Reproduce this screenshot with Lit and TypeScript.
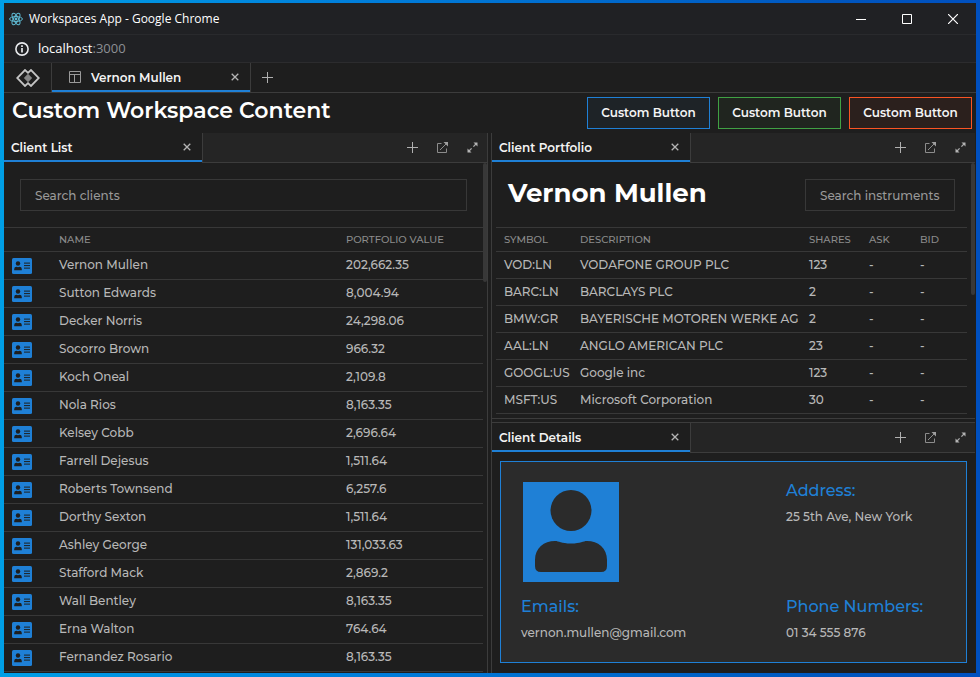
import { LitElement, html, css, svg } from "lit";
import { customElement, property } from "lit/decorators.js";

const clients: [string, string][] = [
  ["Vernon Mullen", "202,662.35"],
  ["Sutton Edwards", "8,004.94"],
  ["Decker Norris", "24,298.06"],
  ["Socorro Brown", "966.32"],
  ["Koch Oneal", "2,109.8"],
  ["Nola Rios", "8,163.35"],
  ["Kelsey Cobb", "2,696.64"],
  ["Farrell Dejesus", "1,511.64"],
  ["Roberts Townsend", "6,257.6"],
  ["Dorthy Sexton", "1,511.64"],
  ["Ashley George", "131,033.63"],
  ["Stafford Mack", "2,869.2"],
  ["Wall Bentley", "8,163.35"],
  ["Erna Walton", "764.64"],
  ["Fernandez Rosario", "8,163.35"],
];

const instruments: [string, string, string][] = [
  ["VOD:LN", "VODAFONE GROUP PLC", "123"],
  ["BARC:LN", "BARCLAYS PLC", "2"],
  ["BMW:GR", "BAYERISCHE MOTOREN WERKE AG", "2"],
  ["AAL:LN", "ANGLO AMERICAN PLC", "23"],
  ["GOOGL:US", "Google inc", "123"],
  ["MSFT:US", "Microsoft Corporation", "30"],
];

const icon = (w: number, h: number, body: unknown) =>
  html`<svg width=${w} height=${h} viewBox="0 0 ${w} ${h}" fill="none" aria-hidden="true">${body}</svg>`;

const closeIcon = icon(8, 8, svg`<path d="M.7 .7 7.3 7.3M7.3 .7 .7 7.3" stroke="#b4b4b4" stroke-width="1.3"/>`);
const plusIcon = icon(11, 11, svg`<path d="M5.5 0V11M0 5.5H11" stroke="#b0b0b0"/>`);
const popoutIcon = icon(11, 11, svg`<path d="M4.5 1.5H.5V10.5H9.5V6.5M3 8 9 2" stroke="#8c8c8c"/><path d="M6.5 0H11V4.5Z" fill="#a0a0a0"/>`);
const expandIcon = icon(11, 11, svg`<path d="M6.4 4.6 9 2M4.6 6.4 2 9" stroke="#a8a8a8" stroke-width="1.3"/><path d="M6.5 .5H10.5V4.5ZM4.5 10.5H.5V6.5Z" fill="#b4b4b4"/>`);
const cardIcon = icon(20, 16, svg`<rect width="20" height="16" rx="1.5" fill="#1f80d6"/>
  <g fill="#1e1e1e"><circle cx="6" cy="5.5" r="2.2"/><path d="M2.2 12.2V11Q2.2 8.8 4.6 8.8Q6 9.5 7.4 8.8Q9.8 8.8 9.8 11V12.2Z"/>
  <rect x="12" y="4.6" width="6" height="1"/><rect x="12" y="7.1" width="6" height="1"/><rect x="12" y="9.6" width="6" height="1"/></g>`);
const reactIcon = icon(14, 14, svg`<g stroke="#5eb8d0"><ellipse cx="7" cy="7" rx="6.4" ry="2.5"/><ellipse cx="7" cy="7" rx="6.4" ry="2.5" transform="rotate(60 7 7)"/><ellipse cx="7" cy="7" rx="6.4" ry="2.5" transform="rotate(120 7 7)"/></g><circle cx="7" cy="7" r="1.4" fill="#5eb8d0"/>`);
const infoIcon = icon(14, 14, svg`<circle cx="7" cy="7" r="6.1" stroke="#e8eaed" stroke-width="1.6"/><path d="M7 3.2V4.9M7 6V10.6" stroke="#e8eaed" stroke-width="1.7"/>`);
const logoIcon = icon(24, 18, svg`<path d="M12 4.8 16.2 9 12 13.2 7.8 9Z" fill="#858585"/><path d="M12.6 4.4 9 1 1.2 9 9 17 12.6 13.6M11.4 4.4 15 1 22.8 9 15 17 11.4 13.6" stroke="#c4c4c4" stroke-width="1.8"/>`);
const layoutIcon = icon(12, 12, svg`<path d="M.5 .5H11.5V11.5H.5ZM.5 3.5H11.5M5.5 3.5V11.5" stroke="#9a9a9a"/>`);
const avatar = icon(96, 100, svg`<rect width="96" height="100" fill="#1f80d6"/><circle cx="48" cy="28.5" r="20.5" fill="#2b2b2b"/><path d="M12 78C12 66 21 59 32 59C36 59 38 61.5 48 61.5C58 61.5 60 59 64 59C75 59 84 66 84 78V84Q84 90 78 90H18Q12 90 12 84Z" fill="#2b2b2b"/>`);

const shared = css`
  * { box-sizing: border-box; }
  svg { display: block; }
  button, input { margin: 0; font: inherit; color: inherit; }
  button { padding: 0; border: 0; background: none; display: flex; align-items: center; justify-content: center; }
`;

@customElement("dock-panel")
class DockPanel extends LitElement {
  @property() heading = "";

  static styles = [shared, css`
    :host { display: flex; flex-direction: column; min-width: 0; min-height: 0; background: #1e1e1e; }
    .bar { display: flex; height: 30px; flex: none; }
    .tab { width: 198px; height: 29px; display: flex; align-items: center; border-bottom: 2px solid #1f80d6; padding-right: 7px; }
    .label { flex: 1; height: 100%; justify-content: flex-start; padding: 2px 0 0 7px; font-weight: 600; color: #f4f4f4; }
    .close { width: 16px; height: 16px; }
    .tools { flex: 1; display: flex; justify-content: flex-end; align-items: center; gap: 14px; padding-right: 7px; background: #252525; border-left: 1px solid #3c3c3c; border-bottom: 1px solid #3c3c3c; }
    .tool { width: 16px; height: 16px; }
    .body { flex: 1; min-height: 0; overflow: hidden; display: flex; flex-direction: column; }
  `];

  render() {
    return html`
      <div class="bar">
        <div class="tab">
          <button class="label">${this.heading}</button>
          <button class="close" aria-label="Close">${closeIcon}</button>
        </div>
        <div class="tools">
          <button class="tool" aria-label="Add">${plusIcon}</button>
          <button class="tool" aria-label="Pop out">${popoutIcon}</button>
          <button class="tool" aria-label="Expand">${expandIcon}</button>
        </div>
      </div>
      <div class="body"><slot></slot></div>`;
  }
}

@customElement("app-root")
class AppRoot extends LitElement {
  static styles = [shared, css`
    :host {
      display: flex; height: 100vh; padding: 3px 4px 4px; overflow: hidden; box-sizing: border-box;
      background: linear-gradient(90deg, #009fe6, #0080dc 35%, #0056bf 85%, #0050c0);
      font-family: Montserrat, Inter, sans-serif; font-size: 12px; color: #b8b8b8;
    }
    .window { flex: 1; min-width: 0; display: flex; flex-direction: column; background: #1e1e1e; }
    .title { display: flex; align-items: center; height: 32px; flex: none; background: #202124; border-bottom: 1px solid #292a2d; padding-left: 5px; font: 12px "Open Sans", sans-serif; color: #fff; }
    .title-text { flex: 1; padding-left: 6px; }
    .control { width: 46px; height: 31px; }
    .address { display: flex; align-items: center; gap: 9px; height: 28px; flex: none; padding-left: 11px; background: #202124; border-bottom: 1px solid #2c2c2e; font: 13px "Open Sans", sans-serif; color: #fff; }
    .host { padding-bottom: 2px; }
    .port { color: #8d9095; }
    .spaces { display: flex; height: 30px; flex: none; border-bottom: 1px solid #3c3c3c; }
    .logo { width: 48px; border-right: 1px solid #3c3c3c; }
    .space { display: flex; align-items: center; width: 198px; height: 29px; padding-right: 7px; border-bottom: 2px solid #1f80d6; }
    .space-label { flex: 1; justify-content: flex-start; gap: 10px; padding-left: 17px; font-weight: 600; color: #f4f4f4; }
    .space-name { padding-top: 2px; }
    .small { width: 16px; height: 16px; }
    .add { width: 34px; border-left: 1px solid #3c3c3c; }
    .header { display: flex; align-items: center; justify-content: space-between; height: 40px; flex: none; padding: 0 4px 0 8px; }
    .headline { margin: 0; padding-bottom: 5px; font-size: 22px; line-height: 32px; font-weight: 600; color: #fff; }
    .actions { display: flex; gap: 8px; }
    .action { width: 123px; height: 32px; padding-bottom: 1px; font-weight: 600; color: #f4f4f4; border: 1px solid; }
    .blue { border-color: #1f80d6; background: #1e2327; }
    .green { border-color: #40a144; background: #20251f; }
    .red { border-color: #fa5424; background: #2b201d; }
    .dock { flex: 1; min-height: 0; display: grid; grid-template-columns: minmax(0, 483fr) 5px minmax(0, 483fr); padding-right: 1px; }
    .vsplit { border: solid #3c3c3c; border-width: 0 1px; }
    .hsplit { border: solid #3c3c3c; border-width: 1px 0; }
    .right { display: grid; grid-template-rows: minmax(0, 285fr) 5px minmax(0, 250fr); min-height: 0; }
    .scroller { position: relative; flex: 1; min-height: 0; overflow: hidden; padding-right: 4px; }
    .thumb { position: absolute; top: 0; right: 0; width: 4px; height: 119px; border-radius: 2px; background: #383838; }
    .thumb.long { height: 132px; }
    .search { display: block; height: 32px; padding: 0 14px; border: 1px solid #383838; background: none; outline: none; font-weight: 500; color: #ccc; }
    .search::placeholder { color: #999; opacity: 1; }
    .search-row { display: flex; align-items: center; justify-content: space-between; height: 64px; padding: 0 16px; }
    .wide { width: 100%; }
    .narrow { width: 150px; }
    .portfolio { padding: 0 8px 0 4px; }
    .portfolio .search-row { padding: 0 12px; }
    .client { margin: 0; padding-bottom: 4px; font-size: 26px; line-height: 36px; font-weight: 700; color: #fff; white-space: nowrap; }
    .grid { width: 100%; table-layout: fixed; border-spacing: 0; border-top: 1px solid #383838; text-align: left; white-space: nowrap; }
    .grid th { height: 24px; padding: 1px 0 0; border-bottom: 1px solid #383838; font-size: 10px; line-height: 14px; font-weight: 500; color: #8c8c8c; }
    .grid td { padding: 0; height: 27px; border-bottom: 1px solid #383838; font-weight: 500; line-height: 16px; }
    .clients td { height: 28px; padding-bottom: 1px; }
    .grid .icon { width: 55px; padding: 0 0 0 8px; }
    .c-value { width: 137px; }
    .grid .c-symbol { width: 84px; padding-left: 8px; }
    .c-shares { width: 60px; }
    .c-ask { width: 51px; }
    .c-bid { width: 47px; }
    .card { flex: 1; display: grid; grid-template-columns: 265fr 160fr; grid-template-rows: 116px 1fr; margin: 8px 8px 10px; padding: 19px 20px; border: 1px solid #1f80d6; background: #2b2b2b; }
    .photo { padding: 1px 0 0 2px; }
    .label { margin: 0 0 7px; font-size: 16px; line-height: 20px; font-weight: 500; color: #1f80d6; }
    .value { margin: 0; font-weight: 500; line-height: 18px; }
  `];

  render() {
    return html`
      <div class="window">
        <div class="title">
          ${reactIcon}<span class="title-text">Workspaces App - Google Chrome</span>
          <button class="control" aria-label="Minimize">${icon(10, 10, svg`<path d="M0 5.5H10" stroke="#fff"/>`)}</button>
          <button class="control" aria-label="Maximize">${icon(10, 10, svg`<path d="M.5 .5H9.5V9.5H.5Z" stroke="#fff"/>`)}</button>
          <button class="control" aria-label="Close">${icon(10, 10, svg`<path d="M0 0 10 10M10 0 0 10" stroke="#fff" stroke-width="1.2"/>`)}</button>
        </div>
        <div class="address">${infoIcon}<span class="host">localhost<span class="port">:3000</span></span></div>
        <nav class="spaces">
          <button class="logo" aria-label="Home">${logoIcon}</button>
          <div class="space">
            <button class="space-label">${layoutIcon}<span class="space-name">Vernon Mullen</span></button>
            <button class="small" aria-label="Close">${closeIcon}</button>
          </div>
          <button class="add" aria-label="Add workspace">${plusIcon}</button>
        </nav>
        <header class="header">
          <h1 class="headline">Custom Workspace Content</h1>
          <div class="actions">
            ${["blue", "green", "red"].map((c) => html`<button class="action ${c}">Custom Button</button>`)}
          </div>
        </header>
        <main class="dock">
          <dock-panel heading="Client List">
            <div class="scroller">
              <div class="search-row"><input class="search wide" placeholder="Search clients" aria-label="Search clients" /></div>
              <table class="grid clients">
                <thead><tr><th class="icon"></th><th>NAME</th><th class="c-value">PORTFOLIO VALUE</th></tr></thead>
                <tbody>
                  ${clients.map(([n, v]) => html`<tr><td class="icon">${cardIcon}</td><td>${n}</td><td>${v}</td></tr>`)}
                </tbody>
              </table>
              <div class="thumb"></div>
            </div>
          </dock-panel>
          <div class="vsplit"></div>
          <div class="right">
            <dock-panel heading="Client Portfolio">
              <div class="scroller portfolio">
                <div class="search-row">
                  <h2 class="client">Vernon Mullen</h2>
                  <input class="search narrow" placeholder="Search instruments" aria-label="Search instruments" />
                </div>
                <table class="grid">
                  <thead><tr><th class="c-symbol">SYMBOL</th><th>DESCRIPTION</th><th class="c-shares">SHARES</th><th class="c-ask">ASK</th><th class="c-bid">BID</th></tr></thead>
                  <tbody>
                    ${instruments.map(([s, d, n]) => html`<tr><td class="c-symbol">${s}</td><td>${d}</td><td>${n}</td><td>-</td><td>-</td></tr>`)}
                  </tbody>
                </table>
                <div class="thumb long"></div>
              </div>
            </dock-panel>
            <div class="hsplit"></div>
            <dock-panel heading="Client Details">
              <section class="card">
                <div class="photo">${avatar}</div>
                <div><h3 class="label">Address:</h3><p class="value">25 5th Ave, New York</p></div>
                <div><h3 class="label">Emails:</h3><p class="value">vernon.mullen@gmail.com</p></div>
                <div><h3 class="label">Phone Numbers:</h3><p class="value">01 34 555 876</p></div>
              </section>
            </dock-panel>
          </div>
        </main>
      </div>`;
  }
}
